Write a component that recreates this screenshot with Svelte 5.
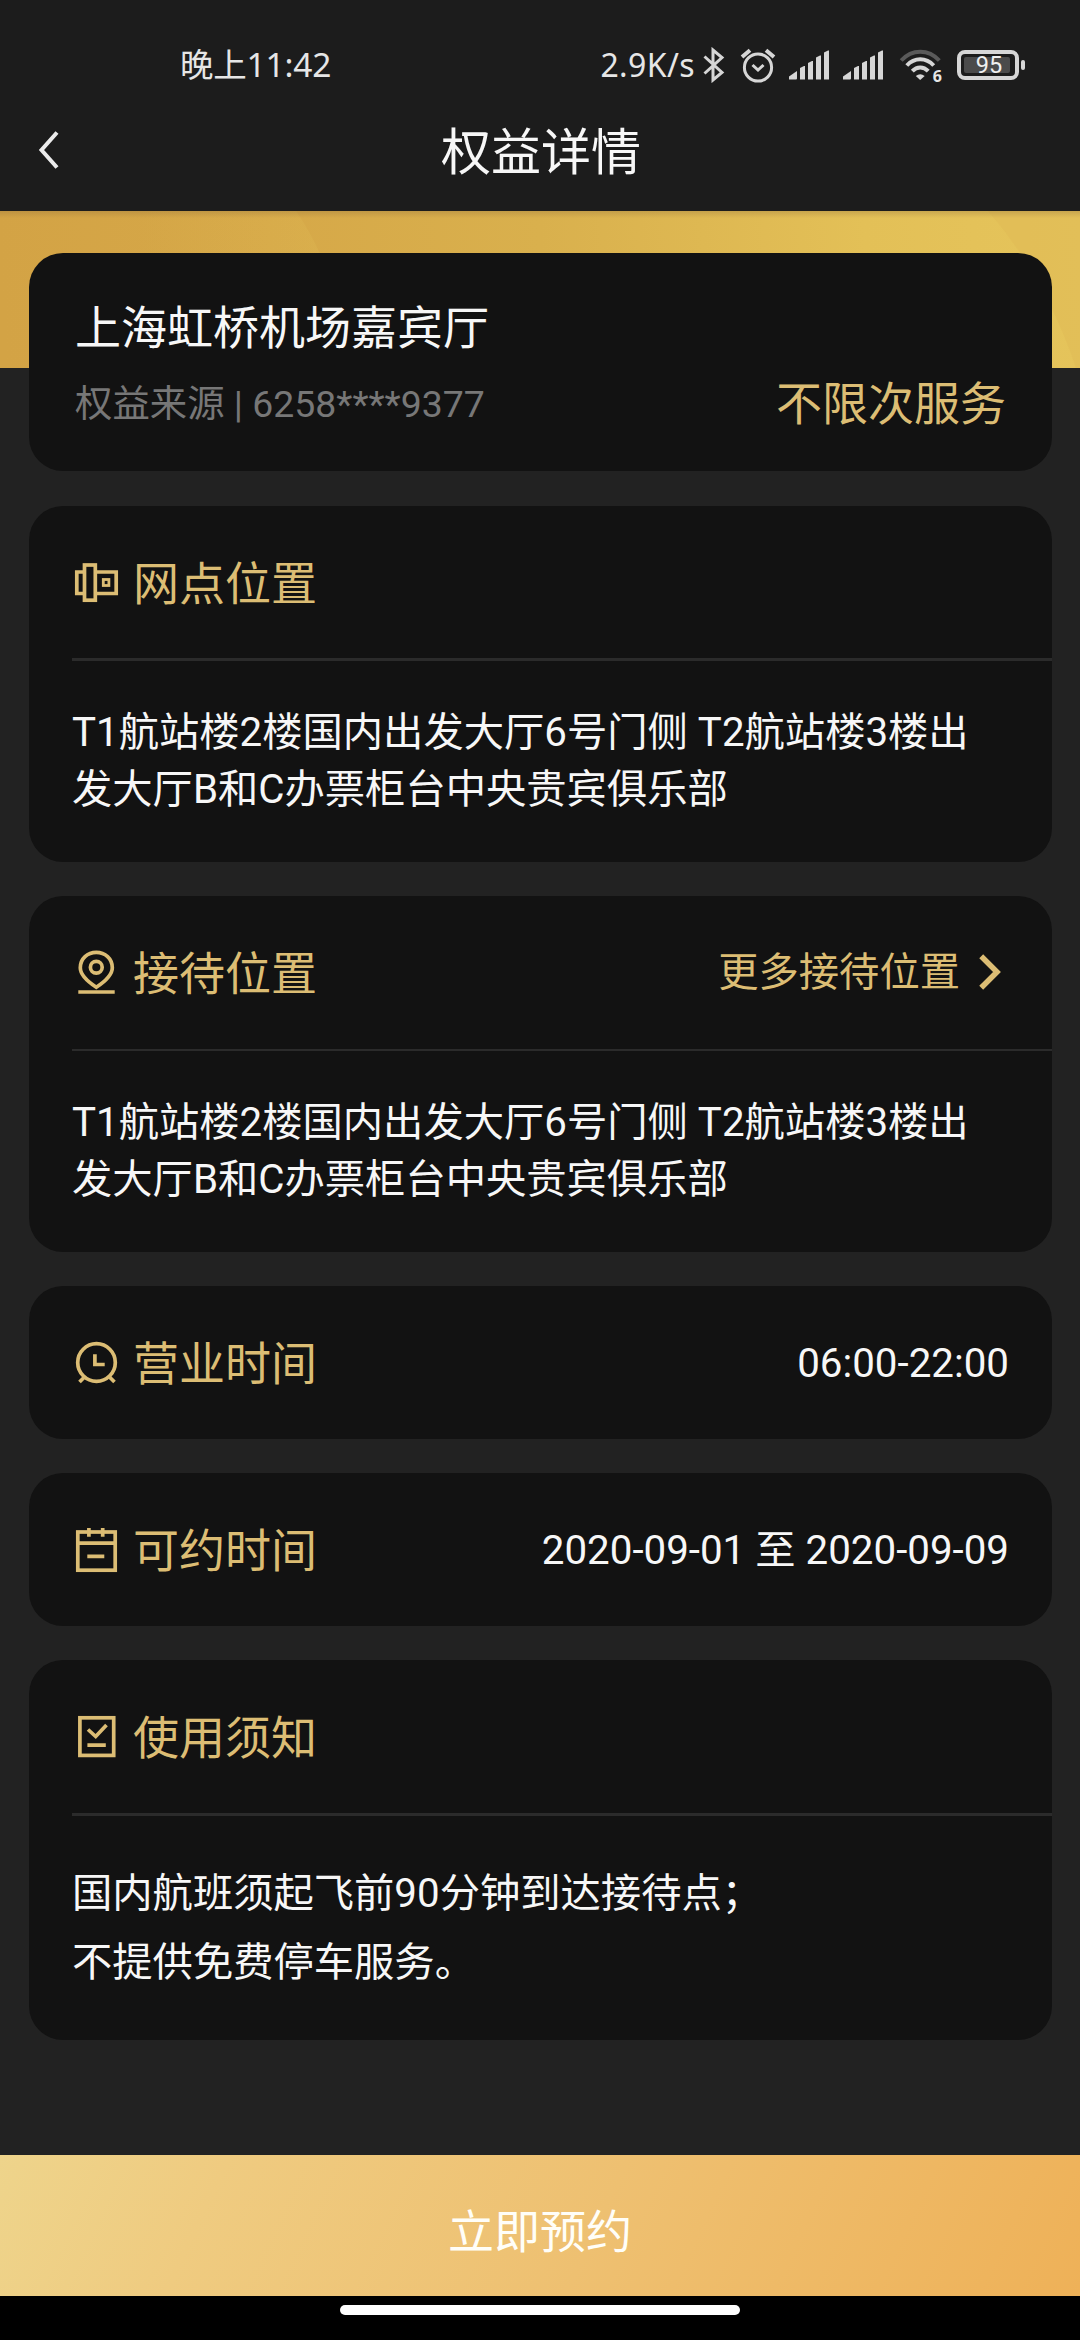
<script>
  const benefit = {
    name: '上海虹桥机场嘉宾厅',
    source: '权益来源 | 6258****9377',
    quota: '不限次服务'
  };

  const address = 'T1航站楼2楼国内出发大厅6号门侧 T2航站楼3楼出\n发大厅B和C办票柜台中央贵宾俱乐部';

  const sections = [
    { icon: 'gate', title: '网点位置', lines: address, size: 'tall' },
    { icon: 'pin', title: '接待位置', lines: address, size: 'tall thin', more: '更多接待位置' },
    { icon: 'clock', title: '营业时间', value: '06:00-22:00' },
    { icon: 'calendar', title: '可约时间', value: '2020-09-01 至 2020-09-09' },
    {
      icon: 'notice',
      title: '使用须知',
      lines: '国内航班须起飞前90分钟到达接待点；\n不提供免费停车服务。',
      size: 'notice'
    }
  ];

  // 信号格: x 坐标和顶部高度
  const bars = [
    { x: 11, y: 16 },
    { x: 19, y: 11 },
    { x: 27, y: 5.5 },
    { x: 35, y: 0.5 }
  ];

  function goBack() {
    history.back();
  }
</script>

<div class="page">
  <header>
    <div class="status-bar">
      <span class="time">晚上11:42</span>
      <div class="status-icons">
        <span class="speed">2.9K/s</span>
        <svg class="bluetooth" width="22" height="36" viewBox="0 0 22 36">
          <path d="M1.5 9.5L19 25.5L10 33V3L19 10.5L1.5 26.5" />
        </svg>
        <svg class="alarm" width="36" height="36" viewBox="0 0 36 36">
          <circle cx="18" cy="20.5" r="13.6" />
          <path d="M12.5 18L18 23L23.5 18" />
          <path class="bell" d="M2 10L10 3.2M26 3.2L34 10" />
        </svg>
        {#each [1, 2] as sim}
          <svg class="signal" width="40" height="30" viewBox="0 0 40 30">
            <path d="M0 29.5V26.5L8 21V28.5Q8 29.5 7 29.5Z" />
            {#each bars as bar}
              <path d="M{bar.x} {bar.y + 2}L{bar.x + 4} {bar.y}H{bar.x + 5}V29.5H{bar.x}Z" />
            {/each}
          </svg>
        {/each}
        <div class="wifi">
          <svg width="43" height="36" viewBox="0 0 43 36">
            <path class="dim" d="M2.2 13.5C13 1.8 29.5 1.8 40.3 13.5" />
            <path d="M7.8 18.5C15.5 10.3 27 10.3 34.7 18.5" />
            <path d="M13.3 24.2C18 19.3 24.5 19.3 29.2 24.2" />
            <path class="dot" d="M16.8 29Q21.2 25.5 25.7 29L21.2 33Z" />
          </svg>
          <span>6</span>
        </div>
        <div class="battery">
          <svg width="69" height="30" viewBox="0 0 69 30">
            <rect class="level" x="7" y="7" width="46" height="16" rx="2" />
            <rect class="shell" x="2" y="2" width="58" height="26" rx="6" />
            <rect class="cap" x="64" y="10" width="4" height="10" rx="2" />
          </svg>
          <span>95</span>
        </div>
      </div>
    </div>
    <div class="nav-bar">
      <button class="back" on:click={goBack} aria-label="返回">
        <svg width="24" height="40" viewBox="0 0 24 40">
          <path d="M20 2.5L4.5 20L20 37.5" />
        </svg>
      </button>
      <h1>权益详情</h1>
      <span class="nav-side"></span>
    </div>
  </header>

  <main>
    <!-- 顶部金色背景 -->
    <svg class="banner" width="1080" height="157" viewBox="0 0 1080 157">
      <defs>
        <linearGradient id="gold" gradientUnits="userSpaceOnUse" x1="0" y1="60" x2="1080" y2="0">
          <stop offset="0" stop-color="#d3a345" />
          <stop offset="0.25" stop-color="#d6a848" />
          <stop offset="0.5" stop-color="#d9b04d" />
          <stop offset="0.8" stop-color="#e3c057" />
          <stop offset="1" stop-color="#e5c45b" />
        </linearGradient>
        <linearGradient id="sheen" x1="0" y1="0" x2="1" y2="0">
          <stop offset="0" stop-color="#e4c35a" stop-opacity="0" />
          <stop offset="1" stop-color="#e4c35a" stop-opacity="0.2" />
        </linearGradient>
        <linearGradient id="shadow" x1="0" y1="0" x2="0" y2="1">
          <stop offset="0" stop-color="#8a6a38" stop-opacity="0.3" />
          <stop offset="1" stop-color="#8a6a38" stop-opacity="0" />
        </linearGradient>
      </defs>
      <rect width="1080" height="157" fill="url(#gold)" />
      <path d="M140 0H296Q310 20 321 45H140Z" fill="url(#sheen)" />
      <path d="M988 0Q1045 65 1076 157H1080V0Z" fill="#d8ab4b" fill-opacity="0.18" />
      <rect width="1080" height="7" fill="url(#shadow)" />
    </svg>

    <section class="card summary">
      <h2>{benefit.name}</h2>
      <div class="summary-row">
        <span class="source">{benefit.source}</span>
        <span class="quota">{benefit.quota}</span>
      </div>
    </section>

    {#each sections as s}
      <section class="card {s.size || 'single'}">
        <div class="card-head">
          <svg class="icon" width="48" height="48" viewBox="0 0 48 48">
            {#if s.icon === 'gate'}
              <rect x="12.5" y="7" width="10.8" height="35.2" />
              <path d="M12.5 14H4.8V35.5H12.5M23.3 14H44.2V35.5H23.3" />
              <rect class="window" x="31.3" y="21.5" width="5.6" height="6" />
            {:else if s.icon === 'pin'}
              <path d="M24.3 39.3C17 34.5 8.3 27.5 8.3 19.8C8.3 10.5 15.5 4.4 24.3 4.4S40.3 10.5 40.3 19.8C40.3 27.5 31.6 34.5 24.3 39.3Z" />
              <circle cx="24.3" cy="19.2" r="5.9" />
              <path d="M6.3 44H42.7" />
            {:else if s.icon === 'clock'}
              <circle cx="24.5" cy="24.5" r="18.8" />
              <path d="M22.9 16.3V26.5H32.7M7.5 44L13 38.5M42.5 44L37 38.5" />
            {:else if s.icon === 'calendar'}
              <rect x="5.8" y="7" width="37.4" height="38.2" />
              <path d="M5.8 18.2H43.2M16.9 3V11.7M30.7 3V11.7M15.3 31.3H32.3" />
            {:else}
              <rect x="7.9" y="5.8" width="33.8" height="37.6" />
              <path d="M16 17.5L23.7 24.5L34.5 13M15.4 33.2H33.8" />
            {/if}
          </svg>
          <h3>{s.title}</h3>
          {#if s.more}
            <a class="more" href="#more">
              <span>{s.more}</span>
              <svg width="24" height="38" viewBox="0 0 24 38">
                <path d="M3.2 3.2L19 19L3.2 34.8" />
              </svg>
            </a>
          {/if}
          {#if s.value}
            <span class="value">{s.value}</span>
          {/if}
        </div>
        {#if s.lines}
          <p class="card-body">{s.lines}</p>
        {/if}
      </section>
    {/each}
  </main>

  <button class="submit">立即预约</button>
  <div class="home-bar"><span></span></div>
</div>

<style>
  :global(body) {
    margin: 0;
    background: #222;
  }

  .page {
    width: 1080px;
    height: 2340px;
    display: flex;
    flex-direction: column;
    overflow: hidden;
    background: #222;
    color: #f7f7f7;
    font-family: Roboto, "Noto Sans CJK SC", sans-serif;
    font-size: 40.3px;
  }

  h1,
  h2,
  h3,
  p {
    margin: 0;
    font-weight: 400;
  }

  button {
    border: none;
    padding: 0;
    font: inherit;
    color: inherit;
    background: none;
    cursor: pointer;
  }

  svg {
    display: block;
    flex-shrink: 0;
    fill: none;
  }

  header {
    height: 211px;
    flex-shrink: 0;
    background: #1c1c1c;
  }

  /* 状态栏 */
  .status-bar {
    height: 92px;
    padding: 38px 54px 0 180px;
    box-sizing: border-box;
    display: flex;
    justify-content: space-between;
    font-family: "Noto Sans", "Noto Sans CJK SC", sans-serif;
    color: #e6e6e6;
  }

  .time {
    margin-top: -1px;
    font-size: 33.5px;
    line-height: 54px;
    letter-spacing: -0.2px;
  }

  .status-icons {
    display: flex;
    align-items: center;
    height: 54px;
  }

  .speed {
    font-size: 32px;
    line-height: 54px;
    letter-spacing: 0.4px;
    margin-right: 8px;
  }

  .bluetooth {
    stroke: #d6d6d6;
    stroke-width: 3;
    margin-right: 15px;
  }

  .alarm {
    stroke: #d6d6d6;
    stroke-width: 3;
    margin-right: 13px;
  }

  .alarm .bell {
    stroke-width: 4;
  }

  .signal {
    fill: #d6d6d6;
    margin-right: 14px;
  }

  .wifi {
    position: relative;
    margin-right: 15px;
    margin-left: 2px;
    stroke: #d6d6d6;
    stroke-width: 4;
  }

  .wifi .dim {
    stroke: #5a5a5a;
  }

  .wifi .dot {
    fill: #d6d6d6;
    stroke: none;
  }

  .wifi span {
    position: absolute;
    right: 0;
    bottom: -5px;
    font-size: 16px;
    line-height: 24px;
    font-weight: 700;
  }

  .battery {
    position: relative;
  }

  .battery .level {
    fill: #4b4b4b;
  }

  .battery .shell {
    stroke: #d6d6d6;
    stroke-width: 4;
  }

  .battery .cap {
    fill: #d6d6d6;
  }

  .battery span {
    position: absolute;
    top: 0;
    left: 2px;
    width: 60px;
    font-family: Roboto, sans-serif;
    font-size: 23.5px;
    line-height: 31px;
    text-align: center;
    color: #f0f0f0;
  }

  /* 导航栏 */
  .nav-bar {
    height: 119px;
    display: flex;
    align-items: center;
    justify-content: space-between;
    padding: 0 35px 0 37px;
  }

  .back,
  .nav-side {
    width: 60px;
  }

  .back {
    margin-bottom: 3px;
  }

  .back path {
    stroke: #ececec;
    stroke-width: 4;
  }

  h1 {
    padding-top: 3px;
    font-size: 50px;
    line-height: 60px;
  }

  main {
    position: relative;
    flex: 1;
    padding: 42px 28px 0 29px;
  }

  .banner {
    position: absolute;
    top: 0;
    left: 0;
  }

  .card {
    position: relative;
    box-sizing: border-box;
    margin-bottom: 34px;
    border-radius: 34px;
    background: #121212;
  }

  .summary {
    height: 218px;
    margin-bottom: 35px;
    padding: 45px 46px 0;
  }

  .summary h2 {
    font-size: 46px;
    line-height: 60px;
  }

  .summary-row {
    display: flex;
    align-items: center;
    justify-content: space-between;
    margin-top: 16px;
  }

  .source {
    font-size: 37.4px;
    line-height: 60px;
    color: #777;
  }

  .quota {
    font-size: 46px;
    line-height: 60px;
    color: #dcbd74;
  }

  .tall {
    height: 356px;
  }

  .single {
    height: 153px;
  }

  .notice {
    height: 380px;
  }

  .card-head {
    height: 152px;
    display: flex;
    align-items: center;
    margin-left: 43px;
    padding-right: 43px;
    color: #dcbd74;
  }

  .icon {
    stroke: #dcbd74;
    stroke-width: 3.7;
    margin-right: 13px;
  }

  .icon .window {
    stroke-width: 2.8;
  }

  h3 {
    padding-top: 4px;
    font-size: 46px;
    line-height: 60px;
  }

  .more {
    margin-left: auto;
    margin-right: 7px;
    display: flex;
    align-items: center;
    gap: 18px;
    line-height: 60px;
    color: inherit;
    text-decoration: none;
  }

  .more span {
    padding-top: 2px;
  }

  .more path {
    stroke: #dcbd74;
    stroke-width: 5.5;
  }

  .value {
    margin-left: auto;
    padding-top: 3px;
    line-height: 60px;
    color: #f7f7f7;
  }

  .card-body {
    margin-left: 43px;
    padding-top: 43px;
    border-top: 3px solid #2b2b2b;
    line-height: 57px;
    white-space: pre;
  }

  .thin .card-body {
    margin-top: 1px;
    border-top-width: 2px;
  }

  .notice .card-body {
    margin-top: 1px;
    line-height: 69px;
  }

  .submit {
    height: 141px;
    flex-shrink: 0;
    padding-top: 5px;
    background: linear-gradient(115deg, #eed48b 0%, #efcb80 20%, #eec071 55%, #eeb158 100%);
    color: #fffef8;
    font-size: 46px;
  }

  .home-bar {
    height: 44px;
    flex-shrink: 0;
    display: flex;
    justify-content: center;
    background: #000;
  }

  .home-bar span {
    width: 400px;
    height: 10px;
    margin-top: 9px;
    border-radius: 5px;
    background: #fff;
  }
</style>
